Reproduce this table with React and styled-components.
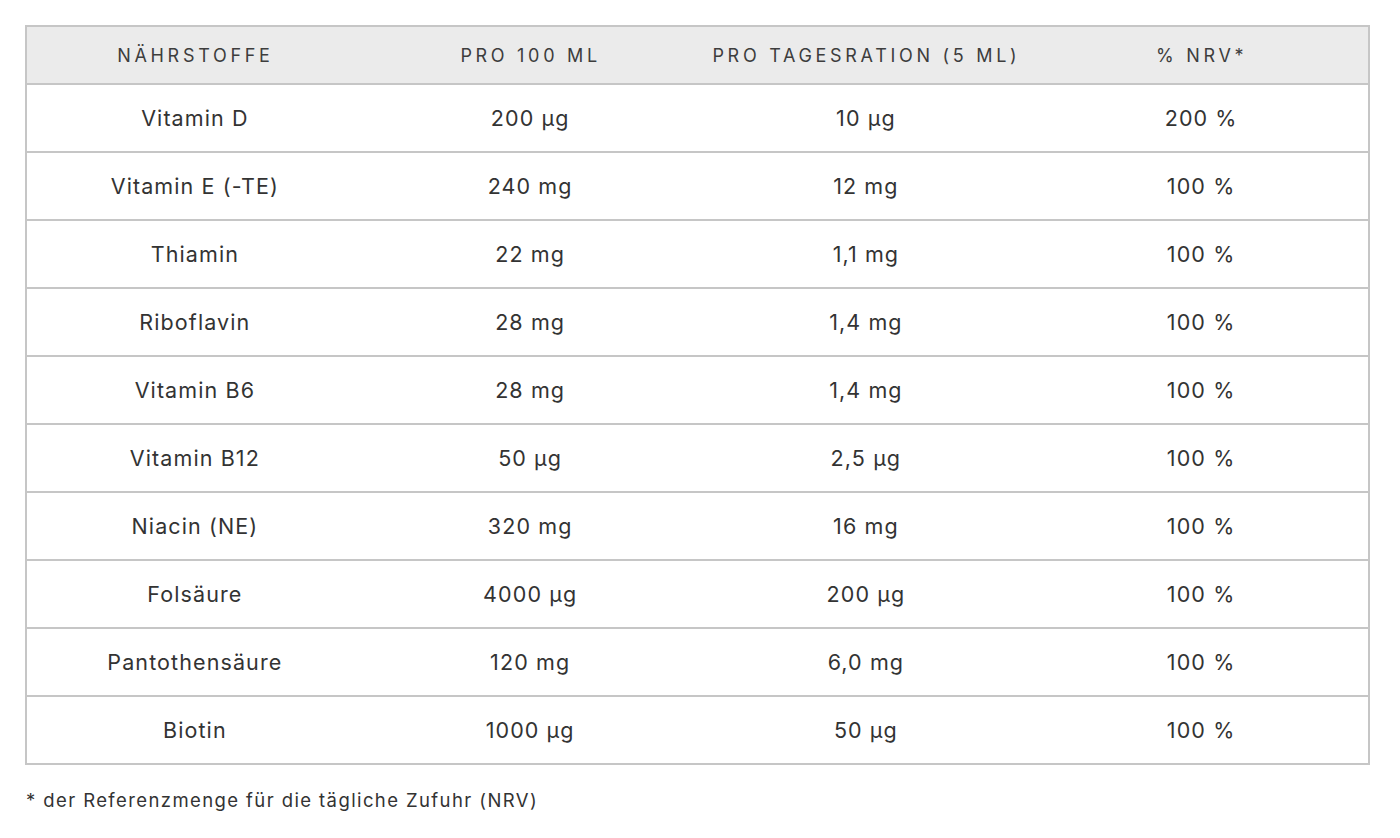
import styled, { createGlobalStyle } from "styled-components";

const GlobalStyle = createGlobalStyle`
  html, body {
    margin: 0;
    padding: 0;
    background: #ffffff;
    font-family: Inter, "Noto Sans", sans-serif;
    color: #333333;
  }
`;

const Page = styled.div`
  padding: 25px 30px 0 25px;
`;

const Table = styled.table`
  width: 100%;
  border-collapse: collapse;
  table-layout: fixed;
  border: 2px solid #c6c6c6;
`;

const HeadCell = styled.th`
  height: 56px;
  padding: 0 0 0 2px;
  background: #ebebeb;
  border-bottom: 2px solid #c6c6c6;
  font-weight: 400;
  font-size: 18px;
  letter-spacing: 3.7px;
  color: #3d3d3d;
  text-align: center;
  text-transform: uppercase;
`;

const Row = styled.tr`
  & + & td {
    border-top: 2px solid #c6c6c6;
  }
`;

const Cell = styled.td`
  height: 66px;
  padding: 0 0 0 1px;
  font-size: 21.5px;
  letter-spacing: 1.1px;
  color: #333333;
  text-align: center;
`;

const Note = styled.p`
  margin: 24px 0 0 1px;
  font-size: 18.5px;
  letter-spacing: 1.4px;
  color: #333333;
`;

const rows = [
  ["Vitamin D", "200 µg", "10 µg", "200 %"],
  ["Vitamin E (-TE)", "240 mg", "12 mg", "100 %"],
  ["Thiamin", "22 mg", "1,1 mg", "100 %"],
  ["Riboflavin", "28 mg", "1,4 mg", "100 %"],
  ["Vitamin B6", "28 mg", "1,4 mg", "100 %"],
  ["Vitamin B12", "50 µg", "2,5 µg", "100 %"],
  ["Niacin (NE)", "320 mg", "16 mg", "100 %"],
  ["Folsäure", "4000 µg", "200 µg", "100 %"],
  ["Pantothensäure", "120 mg", "6,0 mg", "100 %"],
  ["Biotin", "1000 µg", "50 µg", "100 %"],
];

export default function App() {
  return (
    <Page>
      <GlobalStyle />
      <Table>
        <thead>
          <tr>
            <HeadCell>Nährstoffe</HeadCell>
            <HeadCell>Pro 100 ml</HeadCell>
            <HeadCell>Pro Tagesration (5 ml)</HeadCell>
            <HeadCell>% NRV*</HeadCell>
          </tr>
        </thead>
        <tbody>
          {rows.map((r) => (
            <Row key={r[0]}>
              {r.map((v, i) => (
                <Cell key={i}>{v}</Cell>
              ))}
            </Row>
          ))}
        </tbody>
      </Table>
      <Note>* der Referenzmenge für die tägliche Zufuhr (NRV)</Note>
    </Page>
  );
}
